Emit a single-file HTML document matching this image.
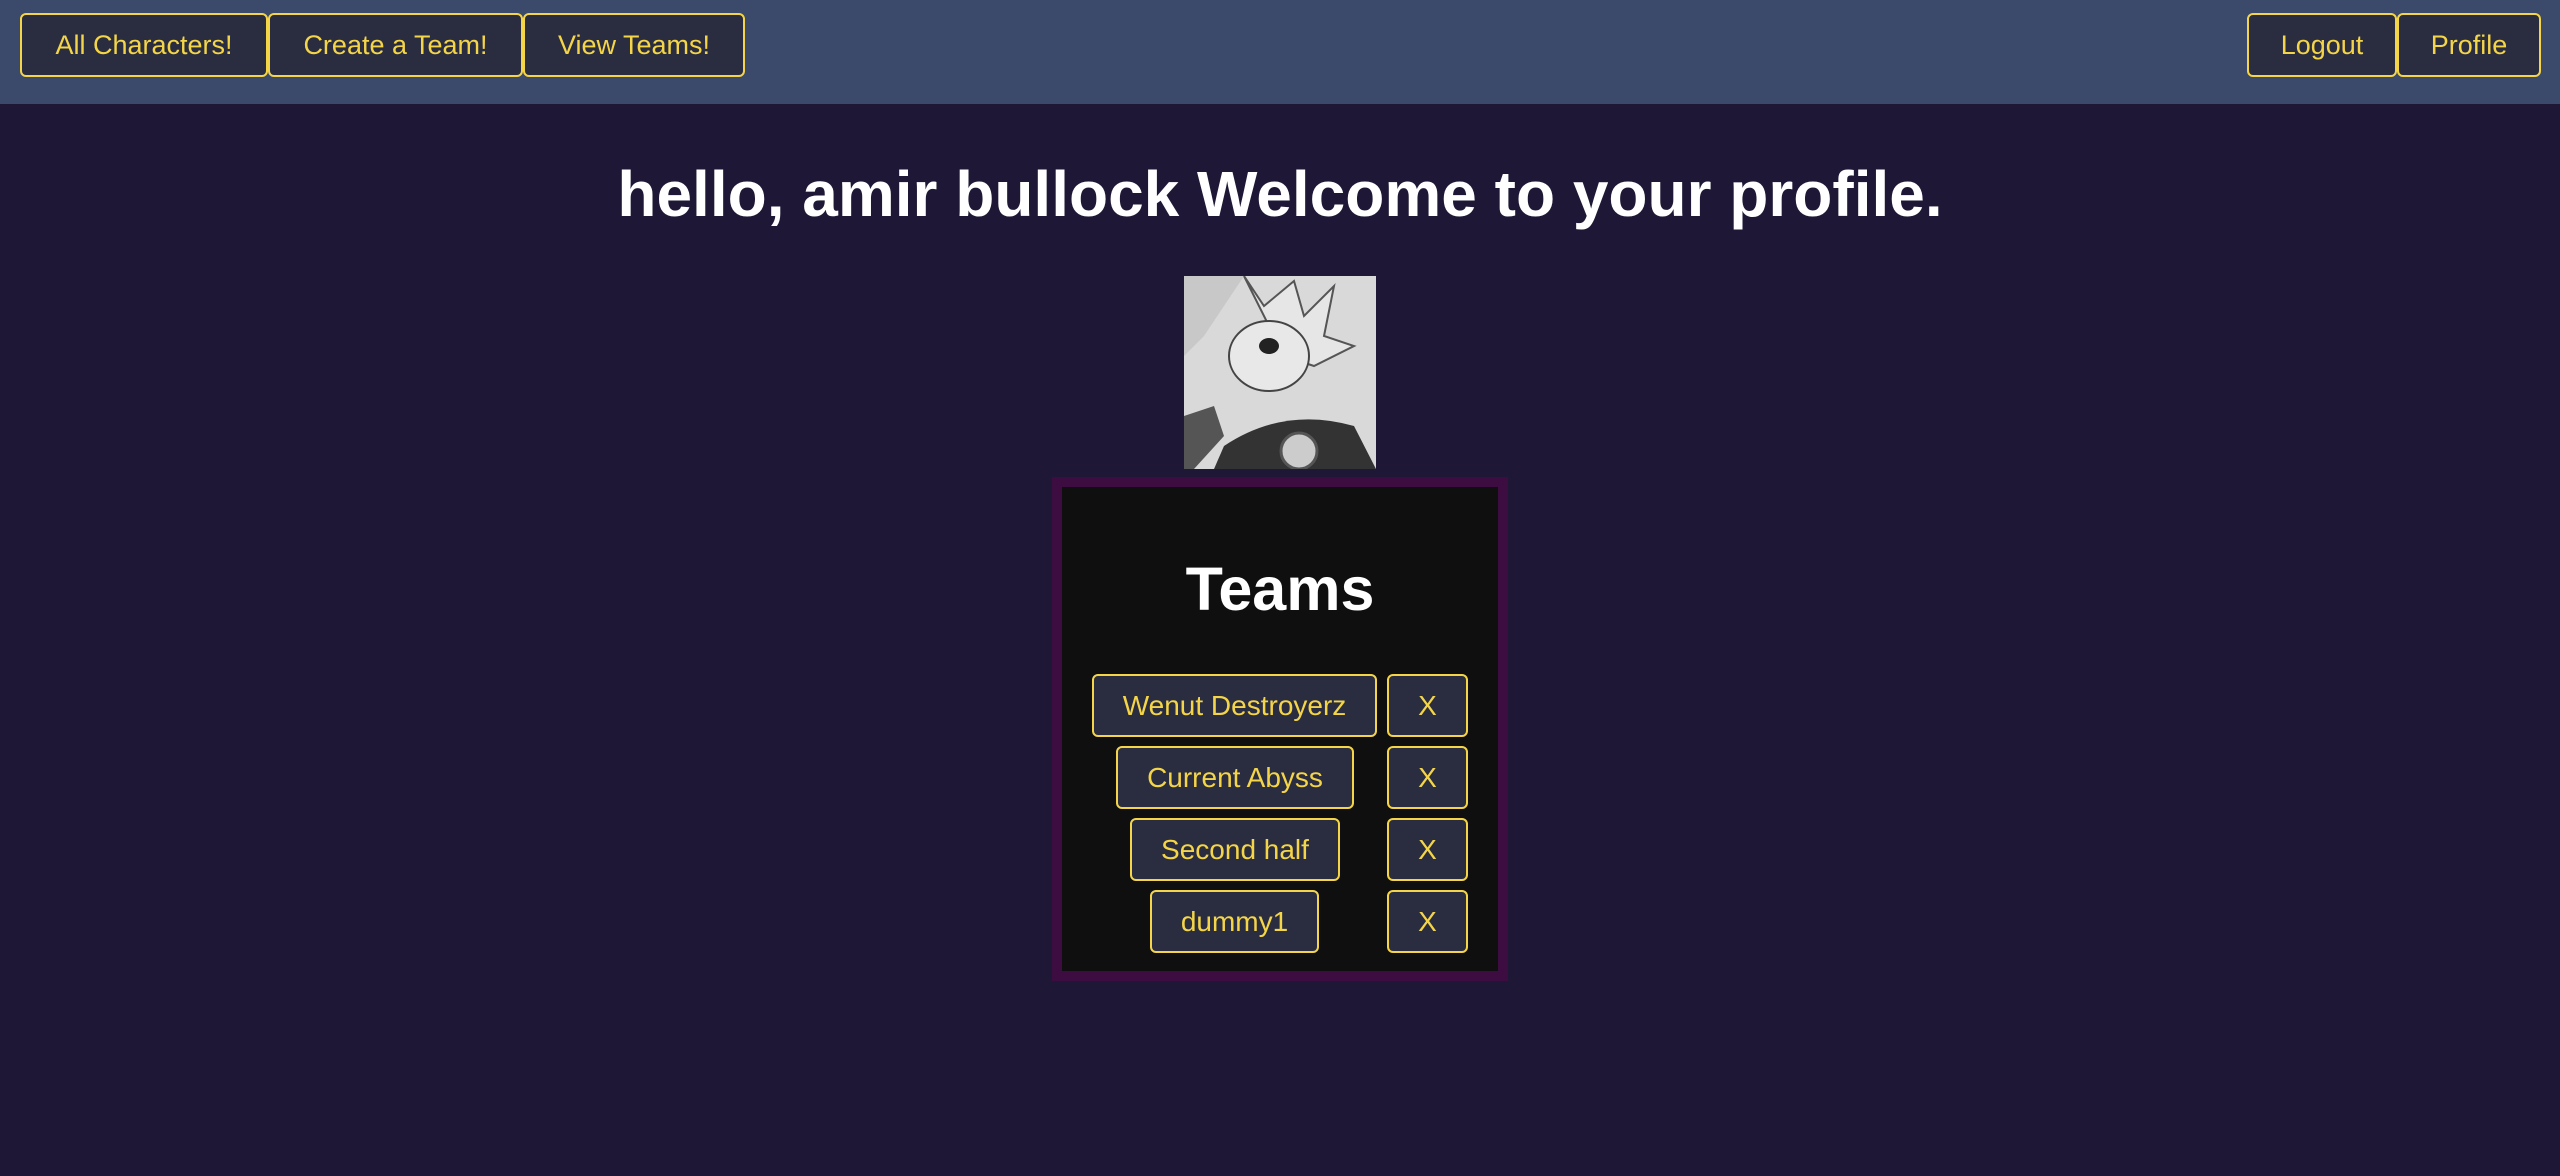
<!DOCTYPE html>
<html><head><meta charset="utf-8"><style>
*{margin:0;padding:0;box-sizing:border-box}
body{width:2560px;height:1176px;background:#1e1836;font-family:"Liberation Sans",Arial,sans-serif;position:relative;overflow:hidden}
.nav{position:absolute;left:0;top:0;width:2560px;height:104px;background:#3b4a6b}
.b{position:absolute;background:#2a2d40;border:2px solid #f5d548;border-radius:6px;color:#f5d548;font-size:27px;display:flex;align-items:center;justify-content:center;white-space:nowrap}
h1{position:absolute;left:0;width:2560px;top:156px;text-align:center;color:#fff;font-size:64px;font-weight:bold;letter-spacing:0;line-height:76px}
.img{position:absolute;left:1184px;top:276px;width:192px;height:193px;background:#ddd;overflow:hidden}
.panel{position:absolute;left:1052px;top:477px;width:456px;height:504px;background:#0f0f0f;border:10px solid #3d0c40}
.panel h2{position:absolute;left:0;right:0;top:67px;text-align:center;color:#fff;font-size:61px;font-weight:bold;line-height:70px}
.t{font-size:28px}
</style></head><body>
<div class="nav">
<div class="b" style="left:20px;top:13px;width:248px;height:64px">All Characters!</div>
<div class="b" style="left:268px;top:13px;width:255px;height:64px">Create a Team!</div>
<div class="b" style="left:523px;top:13px;width:222px;height:64px">View Teams!</div>
<div class="b" style="left:2247px;top:13px;width:150px;height:64px">Logout</div>
<div class="b" style="left:2397px;top:13px;width:144px;height:64px">Profile</div>
</div>
<h1>hello, amir bullock Welcome to your profile.</h1>
<div class="img"><svg width="192" height="193" viewBox="0 0 192 193">
<rect width="192" height="193" fill="#d9d9d9"/>
<path d="M0 0 H60 L20 60 L0 80Z" fill="#c8c8c8"/>
<path d="M60 0 L80 30 L110 5 L120 40 L150 10 L140 60 L170 70 L130 90 L100 80 Z" fill="#e6e6e6" stroke="#555" stroke-width="2"/>
<ellipse cx="85" cy="80" rx="40" ry="35" fill="#e8e8e8" stroke="#444" stroke-width="2"/>
<ellipse cx="85" cy="70" rx="10" ry="8" fill="#222"/>
<path d="M40 170 Q100 130 170 150 L192 193 L30 193 Z" fill="#333"/>
<circle cx="115" cy="175" r="18" fill="#ccc" stroke="#555" stroke-width="3"/>
<path d="M0 140 L30 130 L40 160 L10 193 L0 193Z" fill="#555"/>
</svg></div>
<div class="panel">
<h2>Teams</h2>
</div>
<div class="b t" style="left:1092px;top:674px;width:285px;height:63px">Wenut Destroyerz</div>
<div class="b t" style="left:1387px;top:674px;width:81px;height:63px">X</div>
<div class="b t" style="left:1116px;top:746px;width:238px;height:63px">Current Abyss</div>
<div class="b t" style="left:1387px;top:746px;width:81px;height:63px">X</div>
<div class="b t" style="left:1130px;top:818px;width:210px;height:63px">Second half</div>
<div class="b t" style="left:1387px;top:818px;width:81px;height:63px">X</div>
<div class="b t" style="left:1150px;top:890px;width:169px;height:63px">dummy1</div>
<div class="b t" style="left:1387px;top:890px;width:81px;height:63px">X</div>
</body></html>
